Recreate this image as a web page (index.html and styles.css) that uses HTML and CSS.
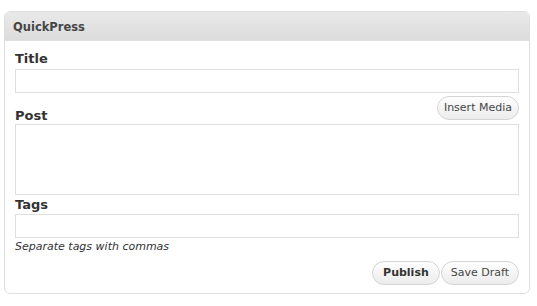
FILE: index.html
```html
<!DOCTYPE html>
<html>
	<head>
		<meta charset="UTF-8">
		<title>QuickPress</title>
		<link rel="stylesheet" href="styles.css">
	</head>
	<body>
		<!--外层面板-->
		<div class="panel">
			<div class="panel-head">QuickPress</div>
			<form class="panel-body">
				<label class="field-label" for="title">Title</label>
				<input class="text-input" type="text" id="title">

				<!--Post标签和上传按钮在同一行-->
				<div class="post-row">
					<label class="field-label" for="content">Post</label>
					<button type="button" class="btn btn-media">Insert Media</button>
				</div>
				<textarea class="text-area" id="content"></textarea>

				<label class="field-label tags-label" for="tags">Tags</label>
				<input class="text-input tags-input" type="text" id="tags">
				<p class="help">Separate tags with commas</p>

				<div class="actions">
					<button type="button" class="btn btn-publish">Publish</button>
					<button type="button" class="btn btn-draft">Save Draft</button>
				</div>
			</form>
		</div>
	</body>
</html>
```

FILE: styles.css
```css
*{
	margin: 0;
	padding: 0;
	box-sizing: border-box;
}
body{
	font-family: "DejaVu Sans", Verdana, sans-serif;
	background-color: #fff;
}
.panel{
	margin: 11px 0 0 4px;
	width: 526px;
	border: 1px solid #dfdfdf;
	border-radius: 6px;
	background-color: #fff;
	overflow: hidden;
}
.panel-head{
	height: 29px;
	padding: 2px 0 0 8px;
	line-height: 26px;
	font-size: 11.5px;
	font-weight: bold;
	color: #464646;
	background: linear-gradient(to bottom, #e9e9e9, #dcdcdc);
	border-bottom: 1px solid #dfdfdf;
}
.panel-body{
	padding: 9px 10px 8px 10px;
	display: flex;
	flex-direction: column;
}
.field-label{
	display: block;
	font-size: 13px;
	font-weight: bold;
	line-height: 17px;
	color: #333;
}
.text-input{
	margin-top: 2px;
	height: 24px;
	border: 1px solid #dfdfdf;
	background-color: #fff;
	outline: none;
}
/*Post那一行*/
.post-row{
	margin-top: 3px;
	height: 28px;
	display: flex;
	justify-content: space-between;
	align-items: flex-end;
}
.post-row .btn{
	align-self: flex-start;
}
.text-area{
	height: 71px;
	border: 1px solid #dfdfdf;
	resize: none;
	outline: none;
}
.tags-label{
	margin-top: 1px;
}
.tags-input{
	margin-top: 1px;
}
.help{
	margin-top: 1px;
	font-size: 11px;
	line-height: 16px;
	font-style: italic;
	color: #333;
}
/*按钮*/
.btn{
	height: 24px;
	padding: 0 10px;
	font-family: "DejaVu Sans", Verdana, sans-serif;
	font-size: 11px;
	line-height: 22px;
	color: #464646;
	border: 1px solid #d4d4d4;
	border-radius: 12px;
	background: linear-gradient(to bottom, #fefefe, #ececec);
	cursor: pointer;
}
.btn-media{
	padding: 0 6px;
}
.actions{
	margin-top: 6px;
	display: flex;
	justify-content: flex-end;
	gap: 1px;
}
.btn-publish{
	font-weight: bold;
	color: #333;
	padding: 0 10px;
}
.btn-draft{
	padding: 0 9px;
}
```
